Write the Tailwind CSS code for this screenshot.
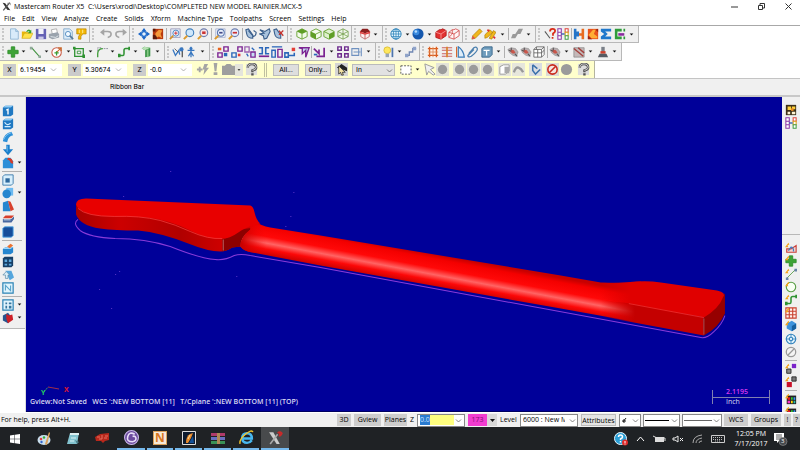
<!DOCTYPE html>
<html lang="en">

<head>
    <meta charset="UTF-8">
    <meta name="viewport" content="width=device-width, initial-scale=1.0">
    <title>Mastercam Router X5</title>
    <script src="https://cdn.jsdelivr.net/npm/@tailwindcss/browser@4"></script>
</head>

<body class="h-screen flex flex-col overflow-hidden bg-white text-[7px] leading-[10px] text-black font-['Open_Sans','Noto_Sans',sans-serif]">

    <!-- Icon sprite, every symbol on a 14x14 grid -->
    <svg class="hidden" xmlns="http://www.w3.org/2000/svg">
        <symbol id="down" viewBox="0 0 14 14"><path d="M2 4h10l-5 6z" fill="#111"/></symbol>
        <symbol id="chev" viewBox="0 0 14 14"><path d="M2 5l5 5 5-5" fill="none" stroke="#666" stroke-width="1.6"/></symbol>
        <symbol id="new" viewBox="0 0 14 14"><path d="M3 1h6l3 3v9H3z" fill="#d9ebfa" stroke="#8fb4d4"/><path d="M9 1v3h3" fill="#bcd8ee" stroke="#8fb4d4"/></symbol>
        <symbol id="open" viewBox="0 0 14 14"><path d="M1 12V4h4l1 1h5v7z" fill="#e9b60c"/><path d="M1 12l3-6h10l-3 6z" fill="#ffe14a" stroke="#c9a000" stroke-width=".6"/><path d="M6 4q3-4 5-1l1-1v4H8l2-2q-2-1-3 1z" fill="#35a32c"/></symbol>
        <symbol id="save" viewBox="0 0 14 14"><path d="M1 1h12v12H1z" fill="#6461b5"/><path d="M4 1h6v6H4z" fill="#f2f2fa"/><path d="M4 10h6v3H4z" fill="#c9c8e8"/></symbol>
        <symbol id="print" viewBox="0 0 14 14"><path d="M4 2l6-1 1 5-6 1z" fill="#fff" stroke="#888" stroke-width=".7"/><path d="M1 7l10-2 2 2v4l-8 2-4-2z" fill="#9aa3ad"/><path d="M3 10l6 1 3-2" stroke="#e8edf2" fill="none"/></symbol>
        <symbol id="preview" viewBox="0 0 14 14"><path d="M2 1h7l3 3v9H2z" fill="#dcecf9" stroke="#7fa6c9"/><circle cx="7" cy="7" r="3" fill="#f3faff" stroke="#4a86bd"/><path d="M9 9l4 4" stroke="#56789a" stroke-width="2"/></symbol>
        <symbol id="cup" viewBox="0 0 14 14"><path d="M2 1h11v6H9l-2 3v3H4v-3l2-3H2z" fill="#f2b705" stroke="#b37d00" stroke-width=".7"/><path d="M5 2v4M9 2v4" stroke="#fff3a8"/></symbol>
        <symbol id="undo" viewBox="0 0 14 14"><path d="M3 4h6q4 0 4 3t-4 4" fill="none" stroke="#a5a5a5" stroke-width="1.800"/><path d="M0 5l5-4v8z" fill="#a5a5a5"/></symbol>
        <symbol id="redo" viewBox="0 0 14 14"><path d="M11 4H5Q1 4 1 7t4 4" fill="none" stroke="#a5a5a5" stroke-width="1.800"/><path d="M14 5L9 1v8z" fill="#a5a5a5"/></symbol>
        <symbol id="pan" viewBox="0 0 14 14"><path d="M7 0l3 4H4zM7 14l3-4H4zM0 7l4-3v6zM14 7l-4-3v6z" fill="#1b67c9"/><circle cx="7" cy="7" r="2.800" fill="#e4f1fd" stroke="#1b67c9" stroke-width="1.400"/></symbol>
        <symbol id="fit" viewBox="0 0 14 14"><path d="M1 1h12v12H1z" fill="#b8390f"/><path d="M4 6l4-4 4 1-2 4 2 5-4-2-4 2z" fill="#f5993a"/><path d="M1 8q5 0 5 5H1zM1 1h3v3H1z" fill="#5c1a0c"/></symbol>
        <symbol id="zbox" viewBox="0 0 14 14"><path d="M2 1h11v10H2z" fill="#e6eefa" stroke="#9a9ab8"/><circle cx="8" cy="6" r="3.500" fill="#eef6ff" stroke="#3c78b8"/><path d="M6 6h4M8 4v4" stroke="#c22"/><path d="M5 9l-4 4" stroke="#d2912a" stroke-width="2"/></symbol>
        <symbol id="zoom" viewBox="0 0 14 14"><circle cx="8" cy="5.500" r="4.500" fill="#cfe7fb" stroke="#4280bd" stroke-width="1.300"/><path d="M5 9l-4 4" stroke="#dc9a2c" stroke-width="2.200"/></symbol>
        <symbol id="zred" viewBox="0 0 14 14"><circle cx="8" cy="5.500" r="4.500" fill="#f6e4e6" stroke="#6d7fb0" stroke-width="1.300"/><path d="M6 4h4v3H6z" fill="#cb3333"/><path d="M5 9l-4 4" stroke="#dc9a2c" stroke-width="2.200"/></symbol>
        <symbol id="zhalf" viewBox="0 0 14 14"><path d="M2 1h11v10H2z" fill="#eef2fb" stroke="#9aa6c8" stroke-width=".8"/><circle cx="8" cy="5.500" r="4" fill="#eaf1fc" stroke="#5a78b0" stroke-width="1.200"/><path d="M6 5.500h4" stroke="#444a88" stroke-width="2"/><path d="M5 9l-4 4" stroke="#dc9a2c" stroke-width="2.200"/></symbol>
        <symbol id="zout" viewBox="0 0 14 14"><circle cx="8" cy="5.500" r="4.500" fill="#e8eefc" stroke="#6d7fb0" stroke-width="1.300"/><path d="M5.500 5.500h5" stroke="#cb3333" stroke-width="2"/><path d="M5 9l-4 4" stroke="#dc9a2c" stroke-width="2.200"/></symbol>
        <symbol id="spin" viewBox="0 0 14 14"><path d="M1 2l3-1 5 7 0 4q-6 0-7-5z" fill="#a9c3de" stroke="#3b5f8c" stroke-width="1.300"/><path d="M4 3l6 7q3-1 3-5l-3-2" fill="none" stroke="#3b5f8c" stroke-width="1.300"/></symbol>
        <symbol id="spin2" viewBox="0 0 14 14"><path d="M1 2l6 2 5-3 1 3-4 8-3 1-1-4-4-2 5-1z" fill="#a9c3de" stroke="#3b5f8c" stroke-width="1.300"/></symbol>
        <symbol id="spinx" viewBox="0 0 14 14"><path d="M1 2l3-1 5 7 0 4q-6 0-7-5z" fill="#a9c3de" stroke="#3b5f8c" stroke-width="1.300"/><path d="M7 3l5 6M12 3L7 8" stroke="#c3302c" stroke-width="1.500"/></symbol>
        <symbol id="cubet" viewBox="0 0 14 14"><path d="M1 4l6-3 6 3v6l-6 3-6-3z" fill="#f2faea" stroke="#5f9e26"/><path d="M1 4l6-3 6 3-6 3z" fill="#5f9e26"/><path d="M7 7v6" stroke="#5f9e26"/></symbol>
        <symbol id="cubef" viewBox="0 0 14 14"><path d="M1 4l6-3 6 3v6l-6 3-6-3z" fill="#f2faea" stroke="#5f9e26"/><path d="M1 4l6 3v6l-6-3z" fill="#5f9e26"/><path d="M7 7l6-3" stroke="#5f9e26"/></symbol>
        <symbol id="cuber" viewBox="0 0 14 14"><path d="M1 4l6-3 6 3v6l-6 3-6-3z" fill="#dff0cd" stroke="#5f9e26"/><path d="M7 7l6-3v6l-6 3z" fill="#5f9e26"/><path d="M1 4l6 3" stroke="#5f9e26"/></symbol>
        <symbol id="cubei" viewBox="0 0 14 14"><path d="M1 4l6-3 6 3v6l-6 3-6-3zM1 4l6 3 6-3M7 7v6M1 10l6-3 6 3M7 1v6" fill="#f2faea" stroke="#6d9b45" stroke-width=".9"/></symbol>
        <symbol id="cubered" viewBox="0 0 14 14"><path d="M2 4h10v6l-5 3-5-3z" fill="#fbf1f1" stroke="#c07070"/><path d="M1 4l3-3h6l3 3-6 2z" fill="#8c2020"/><path d="M1 4l6 2 6-2v2L7 8 1 6z" fill="#e04040"/><path d="M7 6v7" stroke="#c05050"/></symbol>
        <symbol id="globe" viewBox="0 0 14 14"><circle cx="7" cy="7" r="6" fill="#e2f4fd" stroke="#227cb5"/><path d="M1 7h12M7 1v12M2 4h10M2 10h10" stroke="#227cb5" stroke-width=".8"/><ellipse cx="7" cy="7" rx="3" ry="6" fill="none" stroke="#227cb5" stroke-width=".8"/></symbol>
        <symbol id="ball" viewBox="0 0 14 14"><circle cx="7" cy="7" r="6.500" fill="#1558ae"/><circle cx="5" cy="5" r="3.500" fill="#3a8ade"/><circle cx="4.500" cy="4" r="1.500" fill="#b7dcff"/></symbol>
        <symbol id="redbox" viewBox="0 0 14 14"><path d="M1 5l4-3h2l2-1 4 2v6l-6 4-6-2z" fill="#e23131" stroke="#b01818"/><path d="M1 5l6 2 6-4M7 7v6" stroke="#f89a9a" fill="none"/></symbol>
        <symbol id="wirebox" viewBox="0 0 14 14"><path d="M1 5l4-3h2l2-1 4 2v6l-6 4-6-2zM1 5l6 2 6-4M7 7v6M5 2v5l-4 4" fill="#fff5f5" stroke="#d04040" stroke-width=".9"/></symbol>
        <symbol id="pencil" viewBox="0 0 14 14"><path d="M2 9l8-8 3 3-8 8-4 1z" fill="#f0b71c" stroke="#a87800" stroke-width=".7"/><path d="M1 13l1-4 3 3z" fill="#e05050"/></symbol>
        <symbol id="pencils" viewBox="0 0 14 14"><path d="M1 8l6-6 3 3-6 6-3 1zM6 12l5-9 3 2-5 8z" fill="#f0b71c" stroke="#a87800" stroke-width=".7"/><path d="M4 2l2 2M11 10l2 2" stroke="#d33" stroke-width="2"/></symbol>
        <symbol id="graypen" viewBox="0 0 14 14"><path d="M0 12l2-5h3l4-6h5l-3 6H8l-3 5z" fill="#999"/></symbol>
        <symbol id="ask" viewBox="0 0 14 14"><path d="M1 4l6 8" stroke="#555" stroke-width="1.200"/><path d="M7 4q0-3 3-3t3 2.500q0 1.500-2.500 3V9M10 10.500v2" fill="none" stroke="#d92a17" stroke-width="2"/></symbol>
        <symbol id="levels" viewBox="0 0 14 14"><path d="M1 1h4v4H1zM1 5h4v4H1zM1 9h4v4H1z" fill="#fff" stroke="#8b35a5" stroke-width="1.200"/><path d="M9.500 1h3.500v4H9.500z" fill="#fff" stroke="#e0433a" stroke-width="1.200"/><path d="M9.500 5h3.500v4H9.500z" fill="#fff" stroke="#d8a018" stroke-width="1.200"/><path d="M9.500 9h3.500v4H9.500z" fill="#fff" stroke="#43a047" stroke-width="1.200"/><path d="M5 7h4" stroke="#2458b0" stroke-width="1.500"/></symbol>
        <symbol id="hh" viewBox="0 0 14 14"><path d="M1 1h3v12H1zM4 4h3v6H4z" fill="#2575c8"/><path d="M10 1h3v12h-3zM7 6h3v3H7z" fill="#e86b20"/></symbol>
        <symbol id="flame" viewBox="0 0 14 14"><path d="M1 1h12v12H1z" fill="#e8541c"/><path d="M2 8l5-6h3l-2 5 4 3v2H5z" fill="#ffae35"/><path d="M1 13V9l5 4zM10 2l3-1v4z" fill="#9c2410"/></symbol>
        <symbol id="sigma" viewBox="0 0 14 14"><path d="M1 1h12v3H6l3 3-3 3h7v3H1v-3l4-3-4-3z" fill="#1f78cc"/></symbol>
        <symbol id="ecode" viewBox="0 0 14 14"><path d="M1 1h8v3H4v6h5v3H1z" fill="#2f9c3b"/><path d="M5 6h7v3H5z" fill="#8a2ba0"/><path d="M11 1h2v3h-2zM11 10h2v3h-2z" fill="#2f9c3b"/></symbol>

        <symbol id="plus" viewBox="0 0 14 14"><path d="M5 1h4v4h4v4H9v4H5V9H1V5h4z" fill="#3da336" stroke="#2f8d2a"/></symbol>
        <symbol id="line" viewBox="0 0 14 14"><path d="M3 2l9 10" stroke="#3c8f3a" stroke-width="1.200"/><path d="M1 1h3v3H1zM11 11h3v3h-3z" fill="#91a89a"/></symbol>
        <symbol id="circle" viewBox="0 0 14 14"><circle cx="6.500" cy="7.500" r="5.500" fill="#fff" stroke="#c95a46" stroke-width="1.200"/><path d="M6 8l6-6M8 2h4v4" stroke="#c9692c" stroke-width="1.300" fill="none"/><path d="M4 8h5M6.500 6v5" stroke="#3c9c35" stroke-width="1.500"/></symbol>
        <symbol id="rect" viewBox="0 0 14 14"><path d="M2 3h10v9H2z" fill="none" stroke="#2f9232" stroke-width="1.500"/><path d="M5 6h4v3H5z" fill="none" stroke="#2f9232"/><path d="M0 1h3v3H0zM11 10h3v4h-3z" fill="#2f9232"/></symbol>
        <symbol id="fillet" viewBox="0 0 14 14"><path d="M2 13V9Q2 3 8 3" fill="none" stroke="#3c9c35" stroke-width="1.500"/><path d="M2 6V2h4M9 3h5" fill="none" stroke="#889" stroke-dasharray="2 1"/></symbol>
        <symbol id="spline" viewBox="0 0 14 14"><path d="M1 11h5q1 0 1-2V5q0-2 2-2h4" fill="none" stroke="#2f9232" stroke-width="1.800"/><path d="M0 9h3v4H0zM12 1h2v4h-2z" fill="#2f9232"/></symbol>
        <symbol id="cyl" viewBox="0 0 14 14"><path d="M2 3l3-2 7 1v10l-6 1V5z" fill="#3d9448"/><path d="M2 3l4 2 6-3-7-1z" fill="#b8e0b4"/><path d="M9 4v9" stroke="#85c985" stroke-width="2"/></symbol>
        <symbol id="dimA" viewBox="0 0 14 14"><path d="M1 4l3 7 4-6 1 5" stroke="#3877c0" fill="none" stroke-width="1.500"/><path d="M12 2v11" stroke="#555" stroke-width="1.500"/><circle cx="11" cy="4" r="2.500" fill="#3877c0"/><path d="M3 3l4 4" stroke="#555"/></symbol>
        <symbol id="dimB" viewBox="0 0 14 14"><path d="M7 1v12M3 5h8M4 12l3-5 3 5" stroke="#3877c0" fill="none" stroke-width="1.500"/><circle cx="7" cy="3" r="1.800" fill="#3877c0"/></symbol>
        <symbol id="xf1" viewBox="0 0 14 14"><path d="M1 8h5v5H1zM8 1h5v5H8z" fill="none" stroke="#7b2391" stroke-width="1.600"/><path d="M1 2h4v3H1z" fill="#e8631d"/><path d="M8 8h4v4H8z" fill="#2b67b9"/></symbol>
        <symbol id="xf2" viewBox="0 0 14 14"><path d="M8 1h5v5H8z" fill="none" stroke="#7b2391" stroke-width="1.600"/><path d="M1 8h5v5H1z" fill="none" stroke="#2b67b9" stroke-width="1.600"/><path d="M8 9h3v3H8z" fill="#e33f37"/></symbol>
        <symbol id="xf3" viewBox="0 0 14 14"><path d="M1 1h5v6H1z" fill="none" stroke="#9c62b0" stroke-width="1.500"/><path d="M8 7h5v6H8z" fill="#c7dcf4" stroke="#7b2391" stroke-width="1.500"/><path d="M9 2l3 3M3 9l2 3" stroke="#2b67b9" stroke-width="1.500"/></symbol>
        <symbol id="xf4" viewBox="0 0 14 14"><path d="M1 2h4v7H1M13 2H9v7h4" fill="none" stroke="#2b67b9" stroke-width="1.800"/><path d="M1 12h12" stroke="#7b2391" stroke-width="2"/></symbol>
        <symbol id="xf5" viewBox="0 0 14 14"><path d="M1 5h4v8H1z" fill="none" stroke="#2b67b9" stroke-width="1.600"/><path d="M8 4h5v9H8z" fill="none" stroke="#7b2391" stroke-width="1.600"/><path d="M1 1h12" stroke="#2b67b9" stroke-width="1.500"/></symbol>
        <symbol id="xf6" viewBox="0 0 14 14"><path d="M1 8h4v5H1zM5 11h7V8" fill="none" stroke="#2b67b9" stroke-width="1.800"/><path d="M9 2h4v4H9z" fill="#e33f37"/></symbol>
        <symbol id="xf7" viewBox="0 0 14 14"><path d="M1 2h12L9 13V5L5 9V3z" fill="#c5d9f2" stroke="#7b2391" stroke-width="1.600"/></symbol>
        <symbol id="xf8" viewBox="0 0 14 14"><path d="M1 3l6 6V4M4 12h9V2" fill="none" stroke="#7b2391" stroke-width="2"/><path d="M1 10h4" stroke="#2b67b9" stroke-width="2"/></symbol>
        <symbol id="xf9" viewBox="0 0 14 14"><path d="M1 1h4v4H1zM9 1h4v4H9zM1 9h4v4H1zM9 9h4v4H9z" fill="#fff" stroke="#6b2a8c" stroke-width="1.700"/></symbol>
        <symbol id="xf10" viewBox="0 0 14 14"><path d="M1 3h8v8H1zM3 7h8M12 2v10" fill="none" stroke="#6f91c0" stroke-width="1.300"/></symbol>
        <symbol id="bulb" viewBox="0 0 14 14"><circle cx="5" cy="5" r="4" fill="#ffe75c" stroke="#c9ab20" stroke-width=".7"/><path d="M3 9h4v4H3z" fill="#98a4b5"/><path d="M11 2v11" stroke="#4c74ad" stroke-width="2"/></symbol>
        <symbol id="steps" viewBox="0 0 14 14"><path d="M2 11h3V7h4V3h4" fill="none" stroke="#6f86b3" stroke-width="1.500"/><path d="M0 9h4v4H0zM9 1h4v4H9z" fill="#8fa3c9"/></symbol>
        <symbol id="hash" viewBox="0 0 14 14"><path d="M1 1h12v12H1z" fill="#fff2e6"/><path d="M3 1v12M11 1v12M1 3h12M1 11h12" stroke="#d95f22" stroke-width="1.600"/><path d="M7 1v12M1 7h12" stroke="#d98a5a"/></symbol>
        <symbol id="rows" viewBox="0 0 14 14"><path d="M1 2h12M1 5h12M1 9h12M1 12h12" stroke="#c96060" stroke-width="1.300"/><path d="M7 1v12" stroke="#d9822b" stroke-width="2"/></symbol>
        <symbol id="sail" viewBox="0 0 14 14"><path d="M5 1v12h7Q11 5 5 1z" fill="#deedf9" stroke="#3b7cb8" stroke-width="1.400"/><path d="M3 1v12" stroke="#d9682b" stroke-width="1.300"/></symbol>
        <symbol id="clip" viewBox="0 0 14 14"><path d="M2 9l6-7q3-2 4 1t-7 9q-4 2-4-1l7-7" fill="none" stroke="#4a7fae" stroke-width="1.500"/></symbol>
        <symbol id="tee" viewBox="0 0 14 14"><path d="M1 3l3-2h9v9l-3 3H1z" fill="#6e9cbd" stroke="#356287"/><path d="M3 5h7M6.500 5v6" stroke="#fff" stroke-width="1.500"/></symbol>
        <symbol id="gears" viewBox="0 0 14 14"><path d="M1 4l4-2 5 1 3 4-2 5-4-1-4-3z" fill="#b7aeb0" stroke="#888" stroke-width=".6"/><path d="M4 4l4 1 2 3-3 1-3-2z" fill="#c9564a"/><path d="M9 9l3 3M5 2v3M2 5l3 1" stroke="#555" stroke-width="1.200"/></symbol>
        <symbol id="boxw" viewBox="0 0 14 14"><path d="M1 4l3-3h9v9l-3 3H1zM1 4h9l3-3M10 4v9M5.500 4v9M1 8h9M4 1v3M10 8l3-3" fill="#fff" stroke="#555" stroke-width=".9"/></symbol>
        <symbol id="stripe" viewBox="0 0 14 14"><path d="M1 2h12v11H1z" fill="#c4b8b8" stroke="#777" stroke-width=".7"/><path d="M1 3l11 9M6 2l7 6" stroke="#a3403c" stroke-width="1.600"/></symbol>
        <symbol id="tool" viewBox="0 0 14 14"><path d="M5 1h4v6H5z" fill="#7b8088"/><path d="M4 6h6v3H4z" fill="#d0402a"/><path d="M3 9h8l2 4H1z" fill="#565b62"/></symbol>

        <symbol id="fast" viewBox="0 0 14 14"><path d="M1 7h6M4 4v6" stroke="#a4a4a4" stroke-width="2"/><path d="M9 1h4l-2 4h3l-6 8 1-6H7z" fill="#a4a4a4"/></symbol>
        <symbol id="bang" viewBox="0 0 14 14"><path d="M5 0h4L8 9H6zM5 10h4v3H5z" fill="#a4a4a4"/></symbol>
        <symbol id="calc" viewBox="0 0 14 14"><path d="M0 3h3l2-2h4l2 2h3v10H0z" fill="#9e9e9e"/></symbol>
        <symbol id="help" viewBox="0 0 14 14"><path d="M1 1h12v12H1z" fill="#ddd"/><path d="M3 5q0-4 4.500-4T12 5q0 2-4 3v2M8 11v2.500" fill="none" stroke="#555" stroke-width="2.600"/><path d="M3 5q0-4 4.500-4T12 5q0 2-4 3" fill="none" stroke="#eee" stroke-width=".8"/></symbol>
        <symbol id="pick" viewBox="0 0 14 14"><path d="M0 0h14v14H0z" fill="#d4d4d4"/><path d="M2 5l5-4 6 4v4l-5-2z" fill="#222"/><path d="M4 3l7 7-3 0 1 3-2 0-1-3-2 2z" fill="#f3e3a5" stroke="#222" stroke-width=".8"/></symbol>
        <symbol id="dash" viewBox="0 0 14 14"><path d="M2 3h11v9H2z" fill="#fff" stroke="#555" stroke-dasharray="2 1.500"/></symbol>
        <symbol id="arrow" viewBox="0 0 14 14"><path d="M2 1l10 4-4 2 5 5-2 1-5-4-2 4z" fill="#f0f0f0" stroke="#999"/></symbol>
        <symbol id="grey" viewBox="0 0 14 14"><path d="M0 0h14v14H0z" fill="#e3e3d8"/><circle cx="7" cy="7" r="5" fill="#9b9b9b"/></symbol>
        <symbol id="dot" viewBox="0 0 14 14"><circle cx="7" cy="7" r="6" fill="#9b9b9b"/></symbol>
        <symbol id="cubeg" viewBox="0 0 14 14"><path d="M0 0h14v14H0z" fill="#e6e6dc"/><path d="M2 4l4-2h6v7l-4 3H2z" fill="#fff" stroke="#999"/><path d="M7 4h5v7H7z" fill="#aaa"/></symbol>
        <symbol id="bend" viewBox="0 0 14 14"><path d="M0 0h14v14H0z" fill="#e6e6dc"/><path d="M2 10q2-6 5-5t5 5" fill="none" stroke="#999" stroke-width="2.500"/></symbol>
        <symbol id="check" viewBox="0 0 14 14"><path d="M0 0h14v14H0z" fill="#d9dde2"/><path d="M4 2v6l3 4 5-5M4 2l5 4" fill="none" stroke="#3a70ab" stroke-width="1.600"/></symbol>
        <symbol id="no" viewBox="0 0 14 14"><path d="M0 0h14v14H0z" fill="#dcdcd6"/><circle cx="7" cy="7" r="5" fill="#f4e4e0" stroke="#c9281c" stroke-width="1.700"/><path d="M3.500 10.500l7-7" stroke="#c9281c" stroke-width="1.700"/></symbol>

        <symbol id="s1" viewBox="0 0 14 14"><path d="M1 3l3-2h9v10l-3 2H1z" fill="#2079c2"/><path d="M1 3l3-2h9l-3 2z" fill="#8bcbf5"/><path d="M5 6l2-1v6" stroke="#fff" stroke-width="1.600" fill="none"/></symbol>
        <symbol id="s2" viewBox="0 0 14 14"><path d="M1 3l3-2h9v10l-3 2H1z" fill="#2079c2"/><path d="M1 3l3-2h9l-3 2z" fill="#8bcbf5"/><path d="M3 5q3 5 7 1M3 10h7" stroke="#d3edff" stroke-width="1.500" fill="none"/></symbol>
        <symbol id="s3" viewBox="0 0 14 14"><path d="M1 12Q2 3 11 1l2 4Q7 6 6 13z" fill="#2c8fd8"/><path d="M2 10Q4 4 11 2" fill="none" stroke="#8bcbf5"/></symbol>
        <symbol id="s4" viewBox="0 0 14 14"><path d="M5 1h4v5h4l-6 7-6-7h4z" fill="#1b7fcb"/><path d="M6 2v7" stroke="#7cc4f4"/></symbol>
        <symbol id="s5" viewBox="0 0 14 14"><path d="M1 4l3-3h6l3 4v8H1z" fill="#2c8fd8"/><path d="M7 1q6 0 6 7l-3-1q0-3-4-4z" fill="#d63b27"/></symbol>
        <symbol id="s6" viewBox="0 0 14 14"><path d="M1 3l2-2h10v10l-2 2H1z" fill="#d8effc" stroke="#3274a6"/><path d="M4 5h5v5H4z" fill="#2c679c"/></symbol>
        <symbol id="s7" viewBox="0 0 14 14"><path d="M5 1h8v9H5z" fill="#6cbaf0"/><circle cx="5.500" cy="8" r="5" fill="#2686cf"/></symbol>
        <symbol id="s8" viewBox="0 0 14 14"><path d="M1 3l6-2 3 12H1z" fill="#2686cf"/><path d="M7 1l3 1 4 9-4 2z" fill="#d8402c"/></symbol>
        <symbol id="s9" viewBox="0 0 14 14"><path d="M4 3h10l-3 3H1z" fill="#d8402c"/><path d="M1 7h10l3-3v3l-3 4H1z" fill="#48679f"/><path d="M2 8h8" stroke="#e8f4ff"/></symbol>
        <symbol id="s10" viewBox="0 0 14 14"><path d="M1 3l2-2h10v10l-2 2H1z" fill="#164d9a" stroke="#4fa6e6"/></symbol>
        <symbol id="s11" viewBox="0 0 14 14"><path d="M1 7l3-2h9v6l-3 2H1z" fill="#2686cf"/><path d="M1 7l3-2h9l-3 2z" fill="#9bd5fa"/><path d="M6 4l4-3 3 2-4 3z" fill="#ea7130"/></symbol>
        <symbol id="s12" viewBox="0 0 14 14"><path d="M1 3l2-2h10v10l-2 2H1z" fill="#173f66"/><path d="M3 4h3v3H3zM8 4h3v3H8zM3 9h3v2H3zM8 9h3v2H8z" fill="#5ea9dd"/></symbol>
        <symbol id="s13" viewBox="0 0 14 14"><path d="M4 2h7l3 8-5 3z" fill="#55a6dd"/><path d="M1 7l4-4 4 4-2 0v4H4V7z" fill="#d9eef9" stroke="#5d8aa8" stroke-width=".8"/></symbol>
        <symbol id="s14" viewBox="0 0 14 14"><path d="M1 1h12v12H1z" fill="#e0f4fd" stroke="#2b83b5" stroke-width="1.400"/><path d="M4 10V4l6 6V4" fill="none" stroke="#5ba5cc" stroke-width="1.300"/></symbol>
        <symbol id="s15" viewBox="0 0 14 14"><path d="M1 1h12v12H1z" fill="#e0f4fd" stroke="#2b83b5" stroke-width="1.400"/><path d="M4 4h2v2H4zM8 4h3v2H8zM4 8h2v3H4zM8 8h3v3H8z" fill="#35759e"/></symbol>
        <symbol id="s16" viewBox="0 0 14 14"><path d="M1 4l6-3 5 6-5 6-6-3z" fill="#27558f"/><path d="M5 2l3 2 4-1 1 6-6 4-2-5z" fill="#cd2027"/></symbol>
        <symbol id="r1" viewBox="0 0 14 14"><path d="M1 1h12v12H1z" fill="#3c3018"/><path d="M3 3h4v4H3zM8 3h4v3H8z" fill="#ffd13b"/><path d="M7 5h3v3H7z" fill="#e88a22"/><path d="M3 9h3v3H3zM8 9h4v3H8z" fill="#fff3d2"/></symbol>
        <symbol id="spark" viewBox="0 0 14 14"><path d="M0 6l4-5 1 2-2 1 1 2z" fill="#f3a21c"/></symbol>
        <symbol id="r2" viewBox="0 0 14 14"><path d="M2 12V8h5l6-4v8z" fill="#f6d4d0" stroke="#c9403a" stroke-width="1.300"/><path d="M4 10l3-4q3 0 3 5" fill="none" stroke="#497abb" stroke-width="1.500"/><use href="#spark"/></symbol>
        <symbol id="r3" viewBox="0 0 14 14"><use href="#plus"/><use href="#spark"/></symbol>
        <symbol id="r4" viewBox="0 0 14 14"><path d="M2 12L12 2" stroke="#579d44"/><path d="M1 11h3v3H1zM11 1h3v3h-3z" fill="#6884a8"/><use href="#spark"/></symbol>
        <symbol id="r5" viewBox="0 0 14 14"><circle cx="7" cy="7" r="5.500" fill="#f8fff4" stroke="#579d44" stroke-width="1.300"/><use href="#spark"/></symbol>
        <symbol id="r6" viewBox="0 0 14 14"><use href="#spline"/><use href="#spark"/></symbol>
        <symbol id="r7" viewBox="0 0 14 14"><path d="M1 1h12v12H1zM5 1v12M9 1v12M1 5h12M1 9h12" fill="#fff0ec" stroke="#c9402f" stroke-width="1.300"/><use href="#spark"/></symbol>
        <symbol id="r8" viewBox="0 0 14 14"><path d="M2 4l6-3 5 3v6l-5 3-6-3z" fill="#3d93dc"/><path d="M8 7l5-3v6l-5 3z" fill="#155f9f"/><use href="#spark"/></symbol>
        <symbol id="r9" viewBox="0 0 14 14"><circle cx="7" cy="7" r="5.500" fill="#dff2fc" stroke="#3484bd" stroke-width="1.300"/><circle cx="7" cy="7" r="2" fill="none" stroke="#3484bd" stroke-width="1.300"/><path d="M7 1v4M7 9v4M1 7h4M9 7h4" stroke="#3484bd"/></symbol>
        <symbol id="r10" viewBox="0 0 14 14"><circle cx="7" cy="7" r="5.500" fill="#f4f4f4" stroke="#999" stroke-width="1.500"/><path d="M3 11l8-8" stroke="#999" stroke-width="1.500"/></symbol>
        <symbol id="r11" viewBox="0 0 14 14"><path d="M8 1h5v5H8z" fill="#7a22c9"/><path d="M2 7h5v5H2z" fill="#888" stroke="#222"/><use href="#spark"/></symbol>
        <symbol id="r12" viewBox="0 0 14 14"><path d="M8 1h5v5H8z" fill="#777" stroke="#222"/><path d="M2 7h6v6H2z" fill="#c9122b"/><use href="#spark"/></symbol>
        <symbol id="r13" viewBox="0 0 14 14"><path d="M2 3h11v10H2z" fill="#222"/><path d="M3 5h3v3H3z" fill="#e12"/><path d="M7 5h2v3H7z" fill="#3c3"/><path d="M10 5h2v3h-2z" fill="#39f"/><path d="M3 9h3v3H3z" fill="#f3c"/><path d="M7 9h2v3H7z" fill="#fd0"/><path d="M10 9h2v3h-2z" fill="#2ba"/><use href="#spark"/></symbol>
    </svg>

    <!-- Title bar -->
    <header class="h-[13px] shrink-0 flex items-center pl-[2px] pr-2">
        <svg class="size-[9px] mr-[3px]" viewBox="0 0 14 14"><path d="M1 1l4 1 8 11-5-1z" fill="#333"/><path d="M12 1L2 13" stroke="#555" stroke-width="2"/><path d="M8 2h5v3" fill="none" stroke="#777"/></svg>
        <h1 class="whitespace-pre">Mastercam Router X5  C:\Users\xrodi\Desktop\COMPLETED NEW MODEL RAINIER.MCX-5</h1>
        <div class="ml-auto flex items-center gap-5">
            <button aria-label="Minimize"><svg class="size-[7px]" viewBox="0 0 7 7"><path d="M0 4h7" stroke="#333"/></svg></button>
            <button aria-label="Restore"><svg class="size-[7px]" viewBox="0 0 7 7"><path d="M.5 2.500h4v4h-4zM2 2V.5h4.500V5H5" fill="none" stroke="#333"/></svg></button>
            <button aria-label="Close"><svg class="size-[7px]" viewBox="0 0 7 7"><path d="M.5.5l6 6M6.500.5l-6 6" stroke="#333"/></svg></button>
        </div>
    </header>

    <nav class="h-3 shrink-0 flex items-center gap-[7px] pl-1">
        <button>File</button>
        <button>Edit</button>
        <button>View</button>
        <button>Analyze</button>
        <button>Create</button>
        <button>Solids</button>
        <button>Xform</button>
        <button>Machine Type</button>
        <button>Toolpaths</button>
        <button>Screen</button>
        <button>Settings</button>
        <button>Help</button>
    </nav>

    <!-- Toolbars: data-icons is expanded by the script at the end. "v" is a drop-down arrow, "|" a divider -->
    <div class="h-[18px] shrink-0 flex border-t border-[#a8a8a8]">
        <div class="w-[90px]" data-icons="new open save print preview cup"></div>
        <div class="w-10" data-icons="undo redo"></div>
        <div class="w-[158px]" data-icons="pan fit | zbox zoom zred | zhalf zout | spin spin2 spinx"></div>
        <div class="w-16" data-icons="cubet cubef cuber cubei"></div>
        <div class="w-[31px]" data-icons="cubered v"></div>
        <div class="w-20" data-icons="globe v ball v redbox wirebox"></div>
        <div class="w-[73px]" data-icons="pencil pencils v | graypen v"></div>
        <div class="w-[103px]" data-icons="ask levels | hh flame sigma ecode v"></div>
    </div>
    <div class="h-[18px] shrink-0 flex">
        <div class="w-[165px]" data-icons="plus v line v circle v rect v fillet v spline v cyl v"></div>
        <div class="w-[45px]" data-icons="dimA dimB v"></div>
        <div class="w-[166px]" data-icons="xf1 xf2 xf3 xf4 xf5 xf6 xf7 | xf8 v xf9 xf10 v"></div>
        <div class="w-11" data-icons="bulb v steps"></div>
        <div class="w-[202px]" data-icons="hash rows sail clip tee v | gears gears boxw | gears v stripe v tool v"></div>
    </div>

    <!-- Coordinates and selection bar -->
    <div class="h-[18px] shrink-0 flex border-b border-[#c4c4c4] font-['Roboto','Liberation_Sans',sans-serif]">
        <div class="flex items-center bg-[#ffffcc] border-r border-[#b5b5a0] pl-[3px] pr-1">
            <label for="x" class="w-[13px] h-3 bg-[#cbcbcb] text-center leading-3">X</label>
            <div class="flex items-center w-11 h-3 ml-[2px] mr-1.5 bg-white">
                <input id="x" class="w-8 h-3 pl-[2px]" value="6.19454">
                <svg class="size-[7px] opacity-60"><use href="#chev"/></svg>
            </div>
            <label for="y" class="w-[13px] h-3 bg-[#cbcbcb] text-center leading-3">Y</label>
            <div class="flex items-center w-11 h-3 ml-[2px] mr-1.5 bg-white">
                <input id="y" class="w-8 h-3 pl-[2px]" value="5.30674">
                <svg class="size-[7px] opacity-60"><use href="#chev"/></svg>
            </div>
            <label for="z" class="w-[13px] h-3 bg-[#cbcbcb] text-center leading-3">Z</label>
            <div class="flex items-center w-11 h-3 ml-[2px] mr-1 bg-white">
                <input id="z" class="w-8 h-3 pl-[2px]" value="-0.0">
                <svg class="size-[7px] opacity-60"><use href="#chev"/></svg>
            </div>
            <button aria-label="Fast point"><svg class="size-[13px]"><use href="#fast"/></svg></button>
            <button aria-label="Relative"><svg class="size-[13px]"><use href="#bang"/></svg></button>
            <button aria-label="Configure"><svg class="size-[13px]"><use href="#calc"/></svg></button>
            <button aria-label="Configure options" class="w-2 h-3 bg-[#e4e4dc] flex items-center justify-center"><svg class="size-1"><use href="#down"/></svg></button>
            <button aria-label="Help" class="ml-[2px]"><svg class="size-[13px]"><use href="#help"/></svg></button>
            <div class="w-[3px] h-3.5 ml-1.5 mr-1.5 border-x border-[#c0c0a0]"></div>
            <button class="w-[26px] h-3 bg-[#dedede] border border-[#bbb] leading-[10px]">All...</button>
            <button class="w-[26px] h-3 ml-1.5 bg-[#dedede] border border-[#bbb] leading-[10px]">Only...</button>
            <button aria-label="Select last" class="ml-1"><svg class="size-[13px]"><use href="#pick"/></svg></button>
            <div class="relative ml-1">
                <select aria-label="Window mode" class="appearance-none block w-[43px] h-3 pl-[3px] bg-[#e2e2e2] border border-[#bbb]">
                    <option>In</option>
                </select>
                <svg class="absolute right-[2px] top-[3px] size-[7px] pointer-events-none"><use href="#chev"/></svg>
            </div>
            <div class="flex items-center ml-1">
                <button aria-label="Window"><svg class="size-[13px]"><use href="#dash"/></svg></button>
                <button aria-label="Window options" class="w-[11px] flex justify-center"><svg class="size-[5px]"><use href="#down"/></svg></button>
                <button aria-label="Pick"><svg class="size-[13px]"><use href="#arrow"/></svg></button>
                <button aria-label="Validate"><svg class="size-[13px]"><use href="#grey"/></svg></button>
            </div>
            <div class="flex items-center gap-px ml-1">
                <button aria-label="Body"><svg class="size-[13px]"><use href="#grey"/></svg></button>
                <button aria-label="Face"><svg class="size-[13px]"><use href="#grey"/></svg></button>
                <button aria-label="Edge"><svg class="size-[13px]"><use href="#grey"/></svg></button>
            </div>
            <div class="flex items-center gap-px ml-1">
                <button aria-label="From back"><svg class="size-[13px]"><use href="#cubeg"/></svg></button>
                <button aria-label="Undo pick"><svg class="size-[13px]"><use href="#bend"/></svg></button>
            </div>
            <button aria-label="Verify" class="ml-1"><svg class="size-[13px]"><use href="#check"/></svg></button>
            <button aria-label="Clear" class="ml-1"><svg class="size-[13px]"><use href="#no"/></svg></button>
            <button aria-label="Done" class="ml-px"><svg class="size-[13px]"><use href="#dot"/></svg></button>
            <button aria-label="Selection help" class="ml-1"><svg class="size-[13px]"><use href="#help"/></svg></button>
        </div>
    </div>

    <div class="h-[18px] shrink-0 bg-[#f0f0f0] border-b-2 border-[#c8c8c8] flex items-center pl-[110px] font-['Roboto','Liberation_Sans',sans-serif]">Ribbon Bar</div>

    <main class="flex-1 min-h-0 flex">
        <!-- Solids toolbar -->
        <aside class="w-[26px] shrink-0 border-r border-[#ddd]">
            <div class="bg-[#f0f0f0] border-b border-[#b8b8b8] pt-[7px] pb-1 pl-[2px]">
                <div data-column="s1 s2 s3 s4 s5v"></div>
                <hr class="w-5 mt-[2px] mb-px border-[#b0b0b0]">
                <div data-column="s6 s7v s8 s9 s10"></div>
                <hr class="w-5 mt-[2px] mb-px border-[#b0b0b0]">
                <div data-column="s11 s12 s13 s14"></div>
                <hr class="w-5 mt-[2px] mb-px border-[#b0b0b0]">
                <div data-column="s15v s16v"></div>
            </div>
        </aside>

        <!-- Graphics view -->
        <section class="relative flex-1 min-w-0 bg-[#000099] border-b border-[#000060]">
            <svg class="block size-full" viewBox="26 97 755 315" preserveAspectRatio="xMinYMid slice">
                <defs>
                    <linearGradient id="neck" gradientUnits="userSpaceOnUse" x1="420" y1="252" x2="414" y2="284">
                        <stop offset="0" stop-color="#c80000"/>
                        <stop offset=".14" stop-color="#f40000"/>
                        <stop offset=".42" stop-color="#ff0808"/>
                        <stop offset=".62" stop-color="#ff6464"/>
                        <stop offset=".8" stop-color="#fc0808"/>
                        <stop offset="1" stop-color="#c80000"/>
                    </linearGradient>
                    <linearGradient id="start" gradientUnits="userSpaceOnUse" x1="240" y1="0" x2="266" y2="0">
                        <stop offset="0" stop-color="#c40000"/>
                        <stop offset="1" stop-color="#f00000" stop-opacity="0"/>
                    </linearGradient>
                    <linearGradient id="heelTop" gradientUnits="userSpaceOnUse" x1="600" y1="0" x2="630" y2="0">
                        <stop offset="0" stop-color="#e00000" stop-opacity="0"/>
                        <stop offset="1" stop-color="#e00000"/>
                    </linearGradient>
                    <linearGradient id="heelSide" gradientUnits="userSpaceOnUse" x1="600" y1="0" x2="634" y2="0">
                        <stop offset="0" stop-color="#c40000" stop-opacity="0"/>
                        <stop offset="1" stop-color="#c40000"/>
                    </linearGradient>
                    <linearGradient id="side" gradientUnits="userSpaceOnUse" x1="76" y1="0" x2="225" y2="0">
                        <stop offset="0" stop-color="#a80000"/>
                        <stop offset=".3" stop-color="#cc0000"/>
                        <stop offset=".7" stop-color="#b00000"/>
                        <stop offset="1" stop-color="#d00000"/>
                    </linearGradient>
                </defs>
                <path d="M78 220Q72 224 80 231Q90 238 115 239Q145 239 170 247Q200 259 215 260Q225 261 234 256Q240 254 250 256L320 268L700 338Q706 339 713 332Q721 325 724 316" fill="none" stroke="#8a3bd8" stroke-width="1"/>
                <!-- headstock -->
                <path d="M76 204V215Q80 226 100 229Q115 231 138 231Q160 233 188 244Q208 252 220 252Q226 252 232 248L240 247L256 226L240 225L80 204z" fill="url(#side)"/>
                <path d="M222 239V252Q228 251 232 248L240 247L254 228L240 230Q230 239 222 239z" fill="#8c0000"/>
                <path d="M223 240V251" stroke="#b86060" stroke-width="1"/>
                <!-- neck -->
                <path d="M250 218Q258 226 270 228L320 236L560 276L600 283Q620 284 640 282L704 335L560 309L320 266L252 253Q244 252 240 247Q240 238 250 230z" fill="url(#neck)"/>
                <path d="M250 218Q258 226 270 228L290 231L284 258L252 253Q244 252 240 247Q240 238 250 230z" fill="url(#start)"/>
                <path d="M76 205Q76 199 86 199L250 206Q253 207 254 212Q256 221 260 224Q246 227 238 233Q230 239 220 239.500Q208 240 190 231Q168 220 146 218Q125 217 110 217Q80 216 76 205z" fill="#e80000"/>
                <path d="M78 209Q86 217 114 217Q140 216 160 221Q175 225 190 232Q208 240 222 239" fill="none" stroke="#f03838" stroke-width=".8"/>
                <!-- heel -->
                <path d="M703 317L724 294V314Q718 328 703 336z" fill="#960000"/>
                <path d="M590 281L612 284L635 282Q648 281 660 283L716 291Q726 293 722 298Q718 309 703 318L630 305L590 297z" fill="url(#heelTop)"/>
                <path d="M590 299L630 304L703 318V336L590 315z" fill="url(#heelSide)"/>
                <path d="M628 304L703 318" stroke="#f03030" stroke-width=".8"/>
                <path d="M703 319V335" stroke="#a05050" stroke-width="1"/>
                <path d="M115 275h1M119 272h1M99 290h1M111 309h1M123 197h1M293 193h1M290 217h1M285 227h1M170 172h1M236 277h1" stroke="#5a35c8" stroke-width="1"/>
            </svg>
            <svg class="absolute left-3 bottom-[14px] w-7 h-3" viewBox="0 0 28 12"><path d="M6 7l4-5" stroke="#3c9c6a" stroke-dasharray="2 1"/><path d="M10 2l11 2" stroke="#a0304a"/></svg>
            <span class="absolute left-[15px] bottom-[15px] leading-[7px] font-bold text-[#22d060]">Y</span>
            <span class="absolute left-[38px] bottom-[18px] leading-[7px] font-bold text-[#e01830]">X</span>
            <p class="absolute left-1 bottom-[5px] leading-[8px] whitespace-pre font-semibold text-[#d8d8f0]">Gview:Not Saved   WCS ':NEW BOTTOM [11]   T/Cplane ':NEW BOTTOM [11] (TOP)</p>
            <div class="absolute right-3 bottom-[4px] w-[58px] pl-3.5 text-[#d8d8f0]">
                <svg class="absolute left-0 top-[3px] w-full h-3.5" viewBox="0 0 58 14" preserveAspectRatio="none"><path d="M.5 0v14M57.500 0v14M0 7.500h58" stroke="#8080b0"/></svg>
                <p class="font-semibold text-[#d838f0]">2.1195</p>
                <p>Inch</p>
            </div>
        </section>

        <!-- Quick masks -->
        <aside class="w-[18px] shrink-0 flex flex-col overflow-hidden bg-[#f0f0f0] pl-[3px] pt-1.5">
            <div class="h-32 shrink-0" data-column="r1 levels"></div>
            <hr class="-ml-[3px] mb-1.5 mt-[3px] border-[#b8b8b8]">
            <div class="shrink-0" data-column="r2 r3 r4 r5 r6 r7 r8 r9 r10"></div>
            <hr class="w-3 mt-[2px] mb-px border-[#b0b0b0]">
            <div class="shrink-0" data-column="r11 r12"></div>
            <hr class="w-3 mt-[2px] mb-px border-[#b0b0b0]">
            <div class="shrink-0" data-column="r13 r13"></div>
        </aside>
    </main>

    <!-- Status bar -->
    <footer class="h-[15px] shrink-0 flex items-center bg-[#f0f0f0] border-t border-white pl-px">
        <span>For help, press Alt+H.</span>
        <div class="ml-auto flex items-center">
            <button class="w-[14px] h-3 bg-[#cdcdcd] mr-[3px]">3D</button>
            <button class="w-[27px] h-3 bg-[#cdcdcd] mr-[3px]">Gview</button>
            <button class="w-[23px] h-3 bg-[#cdcdcd] mr-[3px]">Planes</button>
            <label for="depth" class="w-[6px] mr-px">Z</label>
            <div class="flex items-center w-12 h-[13px] bg-white border border-[#888] mr-[3px] pl-[2px]">
                <input id="depth" class="w-[34px] h-[10px] bg-[linear-gradient(to_right,#2a7bd0_10px,#ffff80_10px)] text-[#cfe4ff]" value="0.0">
                <svg class="ml-auto mr-[2px] size-[7px]"><use href="#chev"/></svg>
            </div>
            <button class="w-[19px] h-3 bg-[#f23cd0] text-[#7b1070]">173</button>
            <button aria-label="Color" class="w-[10px] h-3 bg-[#d8d8d8] flex items-center justify-center mr-[3px]"><svg class="size-[7px]"><use href="#down"/></svg></button>
            <label for="level" class="w-[18px] mr-[2px]">Level</label>
            <div class="relative mr-[3px]">
                <select id="level" class="appearance-none block w-[58px] h-[13px] pl-[2px] pr-3 bg-white border border-[#888]">
                    <option>6000 : New Model</option>
                </select>
                <svg class="absolute right-[2px] top-[3px] size-[7px] pointer-events-none"><use href="#chev"/></svg>
            </div>
            <button class="w-[35px] h-3 bg-[#e4e4e4] border border-[#bbb] leading-[9px] mr-[3px]">Attributes</button>
            <div class="relative mr-[2px]">
                <select aria-label="Point style" class="appearance-none block w-[22px] h-[13px] bg-white border border-[#888]"></select>
                <svg class="absolute left-[3px] top-1 size-[5px] pointer-events-none" viewBox="0 0 5 5"><path d="M0 3h4M2 1v4M1 4l3-4" stroke="#222"/></svg>
                <svg class="absolute right-[2px] top-[3px] size-[7px] pointer-events-none"><use href="#chev"/></svg>
            </div>
            <div class="relative mr-[2px]">
                <select aria-label="Line style" class="appearance-none block w-[37px] h-[13px] bg-white border border-[#888]"></select>
                <span class="absolute left-[2px] top-[6px] w-6 h-px bg-black pointer-events-none"></span>
                <svg class="absolute right-[2px] top-[3px] size-[7px] pointer-events-none"><use href="#chev"/></svg>
            </div>
            <div class="relative mr-[2px]">
                <select aria-label="Line width" class="appearance-none block w-10 h-[13px] bg-white border border-[#888]"></select>
                <span class="absolute left-[2px] top-[6px] w-7 h-px bg-[#666] pointer-events-none"></span>
                <svg class="absolute right-[2px] top-[3px] size-[7px] pointer-events-none"><use href="#chev"/></svg>
            </div>
            <button class="w-6 h-3 bg-[#cdcdcd] mr-[3px]">WCS</button>
            <button class="w-[30px] h-3 bg-[#cdcdcd] mr-[3px]">Groups</button>
            <button class="w-[7px] h-3 bg-[#cdcdcd] mr-[2px]">!</button>
            <button class="w-[7px] h-3 bg-[#cdcdcd]">?</button>
        </div>
    </footer>

    <!-- Windows taskbar -->
    <div class="h-[23px] shrink-0 flex items-stretch bg-[#1f2225] text-white">
        <button aria-label="Start" class="w-[29px] flex items-center justify-center">
            <svg class="size-[10px]" viewBox="0 0 10 10"><path d="M0 1.500l4.500-.7v3.900H0zM5 .7L10 0v4.700H5zM0 5.200h4.500v4L0 8.500zM5 5.200h5V10l-5-.8z" fill="#fff"/></svg>
        </button>
        <button aria-label="Paint" class="w-[29px] flex items-center justify-center">
            <svg class="size-[14px]" viewBox="0 0 14 14"><ellipse cx="7" cy="8" rx="6.500" ry="5" fill="#c9dfee"/><circle cx="4" cy="7" r="1.300" fill="#d44"/><circle cx="7" cy="5.500" r="1.200" fill="#3a3"/><circle cx="4.500" cy="10" r="1.200" fill="#36c"/><path d="M12 0l1 1-3 12-2-1z" fill="#dca25c"/></svg>
        </button>
        <button aria-label="Notes" class="w-[29px] flex items-center justify-center">
            <svg class="size-[14px]" viewBox="0 0 14 14"><path d="M4 1h9l-2 11H1z" fill="#83c3cf"/><path d="M4 1h9v2H4z" fill="#dceef0"/><path d="M5 6h5M4 9h4" stroke="#d9f2f5"/><path d="M11 12l-2-4 4 2z" fill="#4a7e88"/></svg>
        </button>
        <button aria-label="Solitaire" class="w-[29px] flex items-center justify-center">
            <svg class="size-[14px]" viewBox="0 0 14 14"><path d="M0 5l5-3 9-1v7l-4 1-2 2-2-2H1z" fill="#b8281c"/><path d="M2 5h3M7 3v4M10 4h3M4 7h3M9 6h3" stroke="#e87060"/></svg>
        </button>
        <button aria-label="BitTorrent" class="w-[28px] flex items-center justify-center border-b-2 border-[#76b9ed] mx-px">
            <svg class="size-[15px]" viewBox="0 0 14 14"><circle cx="7" cy="7" r="6.500" fill="#6b4a9e" stroke="#c9b8e8"/><path d="M10 4q-5-3-6.500 2T8 11q4-1 3-4-1-2-3-1" fill="none" stroke="#e8def8" stroke-width="1.500"/></svg>
        </button>
        <button aria-label="Nero" class="w-[26px] flex items-center justify-center border-b-2 border-[#76b9ed] mx-px">
            <span class="size-[14px] bg-[#f6ead8] border border-[#d9a05b] text-[#d9771e] text-[12px] leading-[12px] font-bold">N</span>
        </button>
        <button aria-label="Photo" class="w-[27px] flex items-center justify-center border-b-2 border-[#76b9ed] mx-px">
            <svg class="size-[14px]" viewBox="0 0 14 14"><path d="M.5.5h13v13H.5z" fill="#0d1b30" stroke="#ddd"/><path d="M4 12Q4 5 8 3l3-1-2 5-3 5z" fill="#e88b2c"/><path d="M7 12l4-7 1 7z" fill="#14529a"/><path d="M6 8l2-4" stroke="#ffe0a0"/></svg>
        </button>
        <button aria-label="WinRAR" class="w-[27px] flex items-center justify-center border-b-2 border-[#76b9ed] mx-px">
            <svg class="size-[14px]" viewBox="0 0 14 14"><path d="M0 2h14v3H0z" fill="#b03a6a"/><path d="M0 5h14v1H0zM0 9h14v1H0z" fill="#222"/><path d="M0 6h14v3H0z" fill="#6a6fc0"/><path d="M0 10h14v3H0z" fill="#3a9155"/><path d="M6 2h3v11H6z" fill="#b08a55"/></svg>
        </button>
        <button aria-label="Internet Explorer" class="w-[26px] flex items-center justify-center border-b-2 border-[#76b9ed] mx-px">
            <svg class="size-[15px]" viewBox="0 0 14 14"><path d="M12 9.500Q10 12 7.500 12 3 12 3 7.500T7.500 3q4.500 0 4.500 5H4" fill="none" stroke="#48b8f0" stroke-width="2.300"/><path d="M1 13Q0 9 6 4t7-2" fill="none" stroke="#f3c62c" stroke-width="1.300"/></svg>
        </button>
        <button aria-label="Mastercam" class="w-[28px] flex items-center justify-center border-b-2 border-[#76b9ed] bg-[#484a4c] ml-px">
            <svg class="size-[15px]" viewBox="0 0 14 14"><path d="M1 2l4 0 6 11H8z" fill="#ccc"/><path d="M9 4L2 13" stroke="#aaa" stroke-width="1.500"/><path d="M9 3q2-2 4 0-1 3-3 2M11 2v4" fill="none" stroke="#c92a2a" stroke-width="1.500"/></svg>
        </button>

        <div class="ml-auto flex items-center gap-[5px] pr-3">
            <svg class="size-[14px]" viewBox="0 0 14 14"><circle cx="6.500" cy="6.500" r="6" fill="#2b9fd6" stroke="#e8f6ff"/><path d="M4.500 5q0-2 2-2t2 2q0 1-2 2v1M6.500 9v1.500" fill="none" stroke="#fff" stroke-width="1.500"/><circle cx="11" cy="10.500" r="3" fill="#e02a2a"/><path d="M11 9v2M11 11.500v1" stroke="#fff"/></svg>
            <svg class="w-[14px] h-2" viewBox="0 0 14 8"><path d="M4 6l3.500-4L11 6" fill="none" stroke="#fff"/></svg>
            <svg class="w-[14px] h-2" viewBox="0 0 14 8"><path d="M3 2h9v5H3z" fill="#ddd"/><path d="M12 3h1v3M1 1l4 2v3" stroke="#ddd" fill="none"/></svg>
            <svg class="w-[14px] h-2" viewBox="0 0 14 8"><path d="M2 3h2l3-2v6L4 5H2z" fill="none" stroke="#eee"/><path d="M9 3l3 3M12 3L9 6" stroke="#eee"/></svg>
            <svg class="w-[14px] h-[9px]" viewBox="0 0 14 9"><path d="M3 9q0-7 9-8M6 9q0-4 6-5M9 9q0-2 3-2" fill="none" stroke="#aaa"/></svg>
            <svg class="w-[14px] h-2 ml-[2px]" viewBox="0 0 14 8"><path d="M.5.5h13v7H.5z" fill="none" stroke="#ccc"/><path d="M2 2.500h10M2 4.500h10M4 6h6" stroke="#bbb" stroke-dasharray="1 1"/></svg>
            <div class="w-[34px] ml-1 text-center whitespace-nowrap">
                <p>12:05 PM</p>
                <p>7/17/2017</p>
            </div>
            <div class="relative">
                <svg class="w-[15px] h-[14px]" viewBox="0 0 15 14"><path d="M1 1h10v8H6l-2 2V9H1z" fill="#fff"/><path d="M3 3h6M3 5h6M3 7h4" stroke="#333" stroke-width=".8"/><circle cx="10" cy="9.500" r="4" fill="#45484c" stroke="#888" stroke-width=".7"/></svg>
                <span class="absolute left-2 top-[4px] text-[6px]">3</span>
            </div>
        </div>
    </div>

    <script>
        const icon = (id) => `<button aria-label="${id}" class="flex"><svg class="size-[12px]"><use href="#${id}"/></svg></button>`;

        document.querySelectorAll('[data-icons]').forEach((bar) => {
            bar.classList.add(...'flex shrink-0 items-center justify-between px-[2px] bg-[#f0f0f0] border-r border-b border-[#b8b8b8]'.split(' '));
            bar.innerHTML = '<span class="w-[2px] h-3 mr-[2px] border-l-2 border-dotted border-[#c8c8c8]"></span>' +
                bar.dataset.icons.split(' ').map((id) => {
                    if (id === '|') return '<span class="w-px h-3 bg-[#b0b0b0]"></span>';
                    if (id === 'v') return '<button aria-label="More" class="flex px-[2px]"><svg class="size-[5px]"><use href="#down"/></svg></button>';
                    return icon(id);
                }).join('');
        });

        document.querySelectorAll('[data-column]').forEach((col) => {
            col.innerHTML = col.dataset.column.split(' ').map((id) => {
                const more = id.endsWith('v');
                const name = more ? id.slice(0, -1) : id;
                return `<div class="h-[13px] flex items-center gap-[3px]">${icon(name)}${more ? '<svg class="size-[5px]"><use href="#down"/></svg>' : ''}</div>`;
            }).join('');
        });
    </script>
</body>

</html>
